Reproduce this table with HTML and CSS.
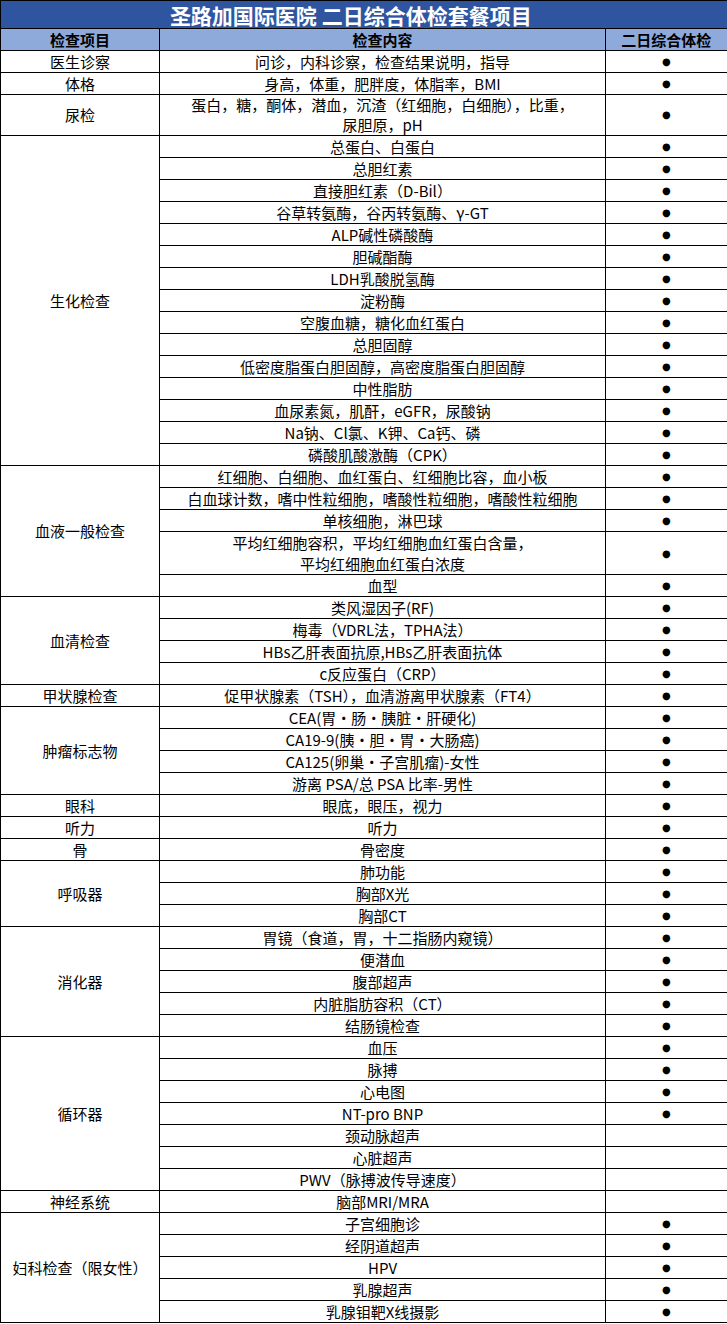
FILE: index.html
```html
<!DOCTYPE html>
<html lang="zh">
<head>
<meta charset="utf-8">
<title>圣路加国际医院 二日综合体检套餐项目</title>
<link rel="stylesheet" href="styles.css">
</head>
<body>
<table class="plan">
<colgroup><col class="c1"><col class="c2"><col class="c3"></colgroup>
<thead>
<tr class="title"><th colspan="3">圣路加国际医院 二日综合体检套餐项目</th></tr>
<tr class="head"><th>检查项目</th><th>检查内容</th><th>二日综合体检</th></tr>
</thead>
<tbody>
<tr><td>医生诊察</td><td>问诊，内科诊察，检查结果说明，指导</td><td class="dot">●</td></tr>
<tr><td>体格</td><td>身高，体重，肥胖度，体脂率，BMI</td><td class="dot">●</td></tr>
<tr class="dbl"><td>尿检</td><td>蛋白，糖，酮体，潜血，沉渣（红细胞，白细胞），比重，<br>尿胆原，pH</td><td class="dot">●</td></tr>

<tr><td rowspan="15">生化检查</td><td>总蛋白、白蛋白</td><td class="dot">●</td></tr>
<tr><td>总胆红素</td><td class="dot">●</td></tr>
<tr><td>直接胆红素（D-Bil）</td><td class="dot">●</td></tr>
<tr><td>谷草转氨酶，谷丙转氨酶、γ-GT</td><td class="dot">●</td></tr>
<tr><td>ALP碱性磷酸酶</td><td class="dot">●</td></tr>
<tr><td>胆碱酯酶</td><td class="dot">●</td></tr>
<tr><td>LDH乳酸脱氢酶</td><td class="dot">●</td></tr>
<tr><td>淀粉酶</td><td class="dot">●</td></tr>
<tr><td>空腹血糖，糖化血红蛋白</td><td class="dot">●</td></tr>
<tr><td>总胆固醇</td><td class="dot">●</td></tr>
<tr><td>低密度脂蛋白胆固醇，高密度脂蛋白胆固醇</td><td class="dot">●</td></tr>
<tr><td>中性脂肪</td><td class="dot">●</td></tr>
<tr><td>血尿素氮，肌酐，eGFR，尿酸钠</td><td class="dot">●</td></tr>
<tr><td>Na钠、Cl氯、K钾、Ca钙、磷</td><td class="dot">●</td></tr>
<tr><td>磷酸肌酸激酶（CPK）</td><td class="dot">●</td></tr>

<tr><td rowspan="5">血液一般检查</td><td>红细胞、白细胞、血红蛋白、红细胞比容，血小板</td><td class="dot">●</td></tr>
<tr><td>白血球计数，嗜中性粒细胞，嗜酸性粒细胞，嗜酸性粒细胞</td><td class="dot">●</td></tr>
<tr><td>单核细胞，淋巴球</td><td class="dot">●</td></tr>
<tr class="dbl tall"><td>平均红细胞容积，平均红细胞血红蛋白含量，<br>平均红细胞血红蛋白浓度</td><td class="dot">●</td></tr>
<tr><td>血型</td><td class="dot">●</td></tr>

<tr><td rowspan="4">血清检查</td><td>类风湿因子(RF)</td><td class="dot">●</td></tr>
<tr><td>梅毒（VDRL法，TPHA法）</td><td class="dot">●</td></tr>
<tr><td>HBs乙肝表面抗原,HBs乙肝表面抗体</td><td class="dot">●</td></tr>
<tr><td>c反应蛋白（CRP）</td><td class="dot">●</td></tr>

<tr><td>甲状腺检查</td><td>促甲状腺素（TSH），血清游离甲状腺素（FT4）</td><td class="dot">●</td></tr>

<tr><td rowspan="4">肿瘤标志物</td><td>CEA(胃·肠·胰脏·肝硬化)</td><td class="dot">●</td></tr>
<tr><td>CA19-9(胰·胆·胃·大肠癌)</td><td class="dot">●</td></tr>
<tr><td>CA125(卵巢·子宫肌瘤)-女性</td><td class="dot">●</td></tr>
<tr><td>游离 PSA/总 PSA 比率-男性</td><td class="dot">●</td></tr>

<tr><td>眼科</td><td>眼底，眼压，视力</td><td class="dot">●</td></tr>
<tr><td>听力</td><td>听力</td><td class="dot">●</td></tr>
<tr><td>骨</td><td>骨密度</td><td class="dot">●</td></tr>

<tr><td rowspan="3">呼吸器</td><td>肺功能</td><td class="dot">●</td></tr>
<tr><td>胸部X光</td><td class="dot">●</td></tr>
<tr><td>胸部CT</td><td class="dot">●</td></tr>

<tr><td rowspan="5">消化器</td><td>胃镜（食道，胃，十二指肠内窥镜）</td><td class="dot">●</td></tr>
<tr><td>便潜血</td><td class="dot">●</td></tr>
<tr><td>腹部超声</td><td class="dot">●</td></tr>
<tr><td>内脏脂肪容积（CT）</td><td class="dot">●</td></tr>
<tr><td>结肠镜检查</td><td class="dot">●</td></tr>

<tr><td rowspan="7">循环器</td><td>血压</td><td class="dot">●</td></tr>
<tr><td>脉搏</td><td class="dot">●</td></tr>
<tr><td>心电图</td><td class="dot">●</td></tr>
<tr><td>NT-pro BNP</td><td class="dot">●</td></tr>
<tr><td>颈动脉超声</td><td class="dot"></td></tr>
<tr><td>心脏超声</td><td class="dot"></td></tr>
<tr><td>PWV（脉搏波传导速度）</td><td class="dot"></td></tr>

<tr><td>神经系统</td><td>脑部MRI/MRA</td><td class="dot"></td></tr>

<tr><td rowspan="5">妇科检查（限女性）</td><td>子宫细胞诊</td><td class="dot">●</td></tr>
<tr><td>经阴道超声</td><td class="dot">●</td></tr>
<tr><td>HPV</td><td class="dot">●</td></tr>
<tr><td>乳腺超声</td><td class="dot">●</td></tr>
<tr><td>乳腺钼靶X线摄影</td><td class="dot">●</td></tr>
</tbody>
</table>
</body>
</html>
```

FILE: styles.css
```css
html, body {
  margin: 0;
  padding: 0;
  background: #ffffff;
}

.plan {
  width: 727px;
  border-collapse: collapse;
  table-layout: fixed;
  font-family: "Noto Sans CJK SC", "Noto Sans", sans-serif;
  font-size: 15px;
  color: #000;
  border-right: 2px solid #000;
}

.c1 { width: 159px; }
.c2 { width: 446px; }
.c3 { width: 122px; }

.plan th,
.plan td {
  border: 1px solid #000;
  padding: 0 2px;
  text-align: center;
  vertical-align: middle;
  line-height: 20px;
  white-space: nowrap;
}

.plan tr { height: 22px; }

.plan tr.title { height: 28px; }
.title th {
  background: #2f55a0;
  color: #ffffff;
  font-size: 21px;
  font-weight: bold;
  line-height: 24px;
  padding-right: 28px;
}

.plan tr.head { height: 22px; }
.head th {
  background: #8eaadb;
  font-weight: bold;
  font-size: 15px;
}

.plan tr.dbl { height: 41px; }
.plan tr.dbl.tall { height: 43px; }
.tall td { line-height: 21px; }

.dot {
  font-family: "DejaVu Sans", sans-serif;
  font-size: 10px;
}
```
